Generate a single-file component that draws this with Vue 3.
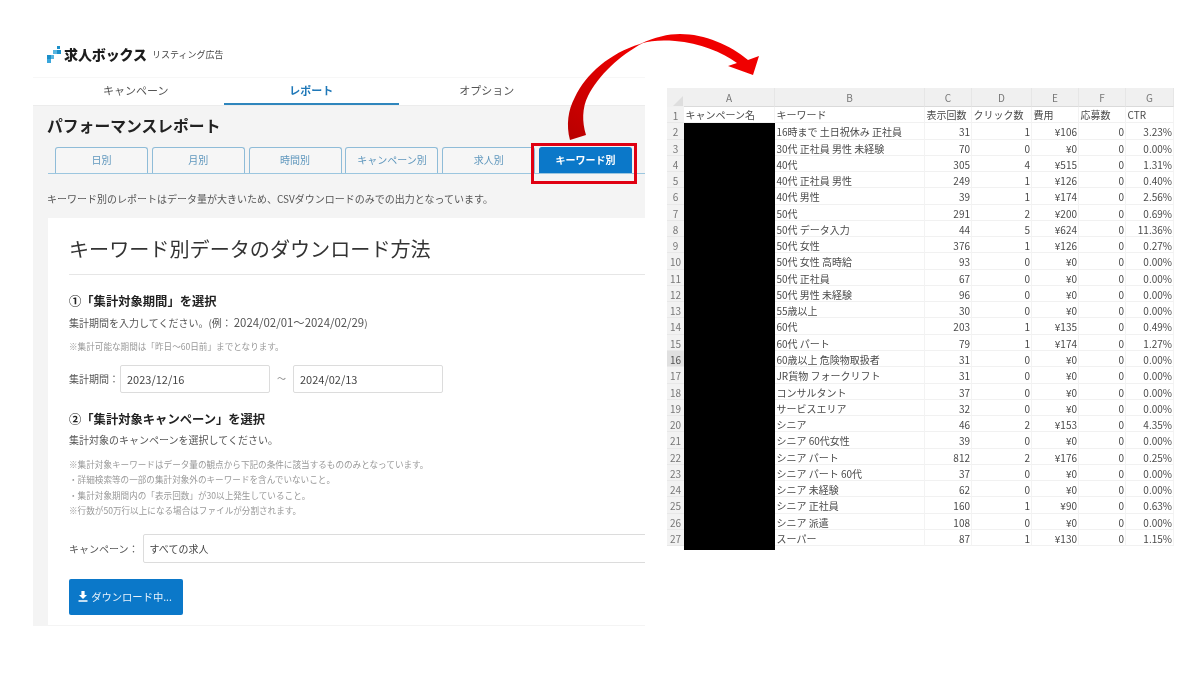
<script setup>
const navItems = [
  { label: 'キャンペーン', active: false },
  { label: 'レポート', active: true },
  { label: 'オプション', active: false },
]
const tabs = ['日別', '月別', '時間別', 'キャンペーン別', '求人別', 'キーワード別']
const columns = ['A', 'B', 'C', 'D', 'E', 'F', 'G']
const rows = [
  ['16時まで 土日祝休み 正社員', 31, 1, '¥106', 0, '3.23%'],
  ['30代 正社員 男性 未経験', 70, 0, '¥0', 0, '0.00%'],
  ['40代', 305, 4, '¥515', 0, '1.31%'],
  ['40代 正社員 男性', 249, 1, '¥126', 0, '0.40%'],
  ['40代 男性', 39, 1, '¥174', 0, '2.56%'],
  ['50代', 291, 2, '¥200', 0, '0.69%'],
  ['50代 データ入力', 44, 5, '¥624', 0, '11.36%'],
  ['50代 女性', 376, 1, '¥126', 0, '0.27%'],
  ['50代 女性 高時給', 93, 0, '¥0', 0, '0.00%'],
  ['50代 正社員', 67, 0, '¥0', 0, '0.00%'],
  ['50代 男性 未経験', 96, 0, '¥0', 0, '0.00%'],
  ['55歳以上', 30, 0, '¥0', 0, '0.00%'],
  ['60代', 203, 1, '¥135', 0, '0.49%'],
  ['60代 パート', 79, 1, '¥174', 0, '1.27%'],
  ['60歳以上 危険物取扱者', 31, 0, '¥0', 0, '0.00%'],
  ['JR貨物 フォークリフト', 31, 0, '¥0', 0, '0.00%'],
  ['コンサルタント', 37, 0, '¥0', 0, '0.00%'],
  ['サービスエリア', 32, 0, '¥0', 0, '0.00%'],
  ['シニア', 46, 2, '¥153', 0, '4.35%'],
  ['シニア 60代女性', 39, 0, '¥0', 0, '0.00%'],
  ['シニア パート', 812, 2, '¥176', 0, '0.25%'],
  ['シニア パート 60代', 37, 0, '¥0', 0, '0.00%'],
  ['シニア 未経験', 62, 0, '¥0', 0, '0.00%'],
  ['シニア 正社員', 160, 1, '¥90', 0, '0.63%'],
  ['シニア 派遣', 108, 0, '¥0', 0, '0.00%'],
  ['スーパー', 87, 1, '¥130', 0, '1.15%'],
]
const headers = ['キーワード', '表示回数', 'クリック数', '費用', '応募数', 'CTR']
</script>

<template>
  <div class="stage">
    <section class="report">
      <div class="logo">
        <svg class="logo-mark" width="16" height="19" viewBox="0 0 16 19">
          <rect x="11" y="1" width="3" height="3" fill="#1b8fc9" />
          <rect x="7" y="5" width="4" height="4" fill="#58b5e0" />
          <rect x="11" y="5" width="4" height="4" fill="#1b8fc9" />
          <rect x="5" y="10" width="3" height="4" fill="#58b5e0" />
          <rect x="1" y="10" width="4" height="4" fill="#1b8fc9" />
          <rect x="1" y="14" width="4" height="4" fill="#3aa6dc" />
        </svg>
        <span class="logo-name">求人ボックス</span>
        <span class="logo-sub">リスティング広告</span>
      </div>
      <nav class="nav">
        <span v-for="item in navItems" :key="item.label" class="nav-item" :class="{ active: item.active }">{{ item.label }}</span>
      </nav>
      <div class="panel">
        <h1 class="title">パフォーマンスレポート</h1>
        <div class="tabs">
          <span v-for="(tab, i) in tabs" :key="tab" class="tab" :class="{ current: i === 5 }">{{ tab }}</span>
        </div>
        <p class="note">キーワード別のレポートはデータ量が大きいため、CSVダウンロードのみでの出力となっています。</p>
        <div class="card">
          <h2 class="card-title">キーワード別データのダウンロード方法</h2>
          <h3 class="step first">①「集計対象期間」を選択</h3>
          <p class="body">集計期間を入力してください。(例：<span class="digits">2024/02/01～2024/02/29</span>)</p>
          <p class="small one">※集計可能な期間は「昨日～60日前」までとなります。</p>
          <div class="period">
            <span class="label">集計期間：</span>
            <span class="input date">2023/12/16</span>
            <span class="wave">～</span>
            <span class="input date">2024/02/13</span>
          </div>
          <h3 class="step second">②「集計対象キャンペーン」を選択</h3>
          <p class="body">集計対象のキャンペーンを選択してください。</p>
          <div class="small-block">
            <p class="small">※集計対象キーワードはデータ量の観点から下記の条件に該当するもののみとなっています。</p>
            <p class="small">・詳細検索等の一部の集計対象外のキーワードを含んでいないこと。</p>
            <p class="small">・集計対象期間内の「表示回数」が30以上発生していること。</p>
            <p class="small">※行数が50万行以上になる場合はファイルが分割されます。</p>
          </div>
          <div class="campaign">
            <span class="label">キャンペーン：</span>
            <span class="input wide">すべての求人</span>
          </div>
          <button class="download" type="button">
            <svg width="10" height="11" viewBox="0 0 10 11"><path d="M3.4 0h3.2v4H9L5 8 1 4h2.4zM0.5 9.3h9v1.4h-9z" fill="#fff" /></svg>
            <span>ダウンロード中...</span>
          </button>
        </div>
      </div>
    </section>

    <section class="sheet">
      <div class="corner"><i></i></div>
      <div v-for="c in columns" :key="c" class="col-head">{{ c }}</div>

      <div class="row-head">1</div>
      <div class="cell text">キャンペーン名</div>
      <div v-for="h in headers" :key="h" class="cell text">{{ h }}</div>

      <div class="redacted"></div>
      <template v-for="(row, r) in rows" :key="r">
        <div class="row-head" :class="{ selected: r === 14 }">{{ r + 2 }}</div>
        <div v-for="(value, c) in row" :key="c" class="cell" :class="c === 0 ? 'text keyword' : 'num'">{{ value }}</div>
      </template>
    </section>

    <svg class="arrow" width="1200" height="675" viewBox="0 0 1200 675">
      <defs>
        <linearGradient id="arrowFill" x1="572" y1="140" x2="640" y2="50" gradientUnits="userSpaceOnUse">
          <stop offset="0" stop-color="#b90000" />
          <stop offset="1" stop-color="#f00000" />
        </linearGradient>
      </defs>
      <path fill="url(#arrowFill)" d="M570 140 C566 125 568 110 575 97 C586 74 610 53 640 44 C655 37 668 34 680 34 C705 34 730 45 748 60 L759 56 L753 75 L728 66 L737 63 C722 52 700 43 675 41 C660 40 650 41 643 43 C620 55 598 76 588 96 C582 108 582 122 586 135 Z" />
    </svg>
    <div class="highlight"></div>
  </div>
</template>

<style>
html, body { margin: 0; background: #fff; }
</style>

<style scoped>
.stage {
  position: relative;
  width: 1200px;
  height: 675px;
  overflow: hidden;
  display: flex;
  align-items: flex-start;
  background: #fff;
  font-family: "Noto Sans CJK JP", "Noto Sans", sans-serif;
  color: #444;
}
p, h1, h2, h3 { margin: 0; }

.report {
  width: 612px;
  margin-left: 33px;
  padding-top: 44px;
  flex: none;
  filter: blur(0.35px);
}
.logo {
  height: 21px;
  padding-left: 13px;
  display: flex;
  align-items: center;
}
.logo-mark { margin-right: 2px; }
.logo-name {
  font-size: 14px;
  font-weight: 900;
  letter-spacing: -0.1px;
  color: #1c1c1c;
  line-height: 21px;
}
.logo-sub {
  margin-left: 5px;
  font-size: 9px;
  color: #444;
  line-height: 21px;
}
.nav {
  margin-top: 12px;
  height: 28px;
  padding-left: 15px;
  display: flex;
  border-top: 1px solid #f7f7f7;
  box-sizing: border-box;
}
.nav-item {
  width: 175.5px;
  box-sizing: border-box;
  text-align: center;
  font-size: 11px;
  line-height: 25px;
  color: #555;
}
.nav-item.active {
  font-weight: 700;
  color: #1f78b8;
  border-bottom: 2px solid #2f86bd;
}
.panel {
  height: 521px;
  box-sizing: border-box;
  padding: 0 0 0 15px;
  background: #f4f4f4;
  border-top: 1px solid #ececec;
}
.title {
  height: 41px;
  margin-left: -1px;
  font-size: 15.8px;
  line-height: 40px;
  font-weight: 700;
  color: #222;
}
.tabs {
  height: 27px;
  padding-left: 7px;
  display: flex;
  gap: 3.8px;
  border-bottom: 1px solid #9cc6df;
  box-sizing: border-box;
}
.tab {
  width: 93px;
  flex: none;
  box-sizing: border-box;
  border: 1px solid #8fbcd8;
  border-bottom: 0;
  border-radius: 3px 3px 0 0;
  font-size: 10px;
  line-height: 24px;
  text-align: center;
  color: #5f97bd;
  background: #f6f6f6;
}
.tab.current {
  background: #0b78c9;
  border-color: #0b78c9;
  color: #fff;
  font-weight: 700;
}
.note {
  height: 44px;
  margin-left: -1px;
  font-size: 10px;
  line-height: 49px;
  color: #555;
}
.card {
  height: 407px;
  box-sizing: border-box;
  padding-left: 21px;
  background: #fff;
  overflow: hidden;
}
.card-title {
  height: 57px;
  box-sizing: border-box;
  padding-top: 15px;
  font-size: 20.1px;
  line-height: 32px;
  font-weight: 400;
  color: #333;
  border-bottom: 1px solid #e6e6e6;
}
.step {
  font-size: 12.3px;
  line-height: 18px;
  font-weight: 700;
  color: #222;
}
.step.first { margin-top: 17px; }
.step.second { margin-top: 17px; }
.body {
  margin-top: 3px;
  font-size: 10px;
  line-height: 18px;
  color: #555;
}
.digits { font-size: 11.4px; margin-left: 2px; }
.small {
  font-size: 8.6px;
  line-height: 15.5px;
  color: #999;
}
.small.one { margin-top: 7px; }
.small-block { margin-top: 8px; }
.period {
  margin-top: 10px;
  display: flex;
  align-items: center;
}
.label {
  font-size: 10px;
  color: #555;
  white-space: nowrap;
}
.input {
  box-sizing: border-box;
  border: 1px solid #dcdcdc;
  border-radius: 2px;
  background: #fff;
  font-size: 11px;
  color: #444;
  display: flex;
  align-items: center;
  padding-left: 6px;
}
.date { width: 150px; height: 28px; margin-left: 1px; }
.wave { width: 23px; text-align: center; font-size: 9px; color: #888; }
.period .wave + .date { margin-left: 0; }
.campaign {
  margin-top: 15px;
  display: flex;
  align-items: center;
}
.wide {
  flex: none;
  width: 520px;
  height: 29px;
  margin-left: 4px;
  border-width: 1.5px;
  font-size: 10px;
}
.download {
  margin-top: 16px;
  width: 114px;
  height: 36px;
  display: flex;
  align-items: center;
  justify-content: center;
  gap: 3px;
  border: 0;
  border-radius: 2px;
  padding: 0 2px 0 0;
  background: #0b78c9;
  color: #e8f3fb;
  font-family: inherit;
  font-size: 10.3px;
}

.sheet {
  position: absolute;
  left: 667px;
  top: 88px;
  width: 508px;
  display: grid;
  grid-template-columns: 17px 91px 150px 47px 60px 47px 47px 48px;
  grid-template-rows: 19px repeat(27, 16.28px) 3px;
  font-size: 10px;
  color: #4a4a4a;
  background: #fff;
  filter: blur(0.35px);
}
.corner {
  background: #f0f0f0;
  position: relative;
}
.corner i {
  position: absolute;
  right: 1px;
  bottom: 1px;
  width: 0;
  height: 0;
  border-left: 10px solid transparent;
  border-bottom: 10px solid #dedede;
}
.col-head {
  background: #f0f0f0;
  border-right: 1px solid #e6e6e6;
  border-bottom: 1px solid #dadada;
  text-align: center;
  line-height: 19px;
  color: #777;
  box-sizing: border-box;
}
.row-head {
  grid-column: 1;
  background: #f2f2f2;
  border-bottom: 1px solid #e8e8e8;
  text-align: center;
  line-height: 17px;
  color: #777;
  box-sizing: border-box;
}
.row-head.selected {
  background: #e0e0e0;
  color: #555;
}
.cell {
  box-sizing: border-box;
  border-right: 1px solid #f3f3f3;
  border-bottom: 1px solid #f1f1f1;
  line-height: 16px;
  padding: 0 1.5px;
  white-space: nowrap;
  overflow: hidden;
}
.num { text-align: right; padding-right: 1px; padding-top: 1px; line-height: 15px; }
.keyword { grid-column: 3; padding-top: 1px; line-height: 15px; }
.redacted {
  grid-column: 2;
  grid-row: 3 / 30;
  background: #000;
  margin-bottom: -1px;
  z-index: 1;
}

.arrow {
  position: absolute;
  left: 0;
  top: 0;
  pointer-events: none;
}
.highlight {
  position: absolute;
  left: 531px;
  top: 143px;
  width: 106px;
  height: 41px;
  box-sizing: border-box;
  border: 3px solid #e00012;
}
</style>
